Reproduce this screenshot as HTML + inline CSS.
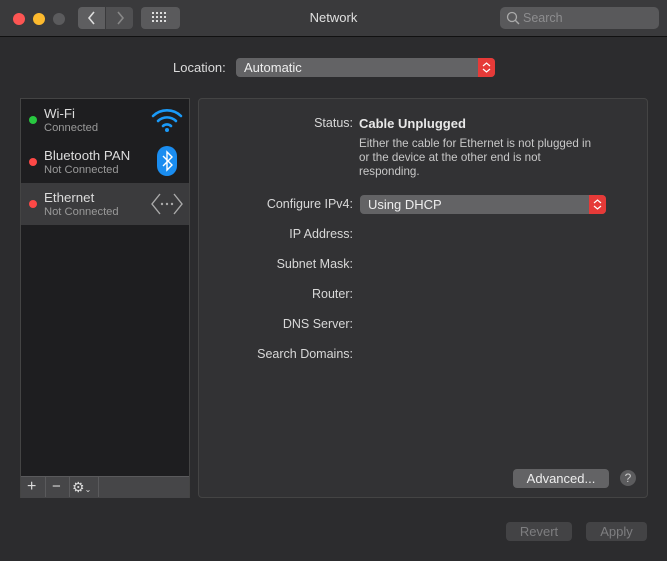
<!DOCTYPE html>
<html><head><style>
body{margin:0;width:667px;height:561px;background:#2c2c2e;font-family:"Liberation Sans",sans-serif;color:#dcdcdc;position:relative;overflow:hidden;font-size:13px}
.a{position:absolute}
.r{text-align:right;width:160px;left:193px;font-size:12.5px;color:#d8d8d8}
</style></head><body>
<div class="a" style="left:0;top:0;width:667px;height:36px;background:#3a3a3c;border-bottom:1px solid #111"></div>
<div class="a" style="left:13px;top:13px;width:12px;height:12px;border-radius:50%;background:#fd5553"></div>
<div class="a" style="left:33px;top:13px;width:12px;height:12px;border-radius:50%;background:#fdba2e"></div>
<div class="a" style="left:53px;top:13px;width:12px;height:12px;border-radius:50%;background:#5b5b5d"></div>
<div class="a" style="left:78px;top:7px;width:27px;height:22px;background:#5e5e60;border-radius:4px 0 0 4px"></div>
<div class="a" style="left:106px;top:7px;width:27px;height:22px;background:#505052;border-radius:0 4px 4px 0"></div>
<svg class="a" style="left:78px;top:7px" width="56" height="22"><path d="M16 5l-5 6 5 6" stroke="#ddd" stroke-width="1.6" fill="none"/><path d="M40 5l5 6-5 6" stroke="#888" stroke-width="1.6" fill="none"/></svg>
<div class="a" style="left:141px;top:7px;width:39px;height:22px;background:#5a5a5c;border-radius:4px"></div>
<svg class="a" style="left:152px;top:12px" width="16" height="12" fill="#ddd"><rect x="0" y="0" width="2" height="2"/><rect x="4" y="0" width="2" height="2"/><rect x="8" y="0" width="2" height="2"/><rect x="12" y="0" width="2" height="2"/><rect x="0" y="4" width="2" height="2"/><rect x="4" y="4" width="2" height="2"/><rect x="8" y="4" width="2" height="2"/><rect x="12" y="4" width="2" height="2"/><rect x="0" y="8" width="2" height="2"/><rect x="4" y="8" width="2" height="2"/><rect x="8" y="8" width="2" height="2"/><rect x="12" y="8" width="2" height="2"/></svg>
<div class="a" style="left:0;width:667px;top:10px;text-align:center;font-size:13px;color:#e0e0e0">Network</div>
<div class="a" style="left:500px;top:7px;width:159px;height:22px;background:#59595b;border-radius:5px"></div>
<svg class="a" style="left:506px;top:11px" width="14" height="14"><circle cx="6" cy="6" r="4.5" stroke="#aaa" stroke-width="1.3" fill="none"/><path d="M9 9l4 4" stroke="#aaa" stroke-width="1.4"/></svg>
<div class="a" style="left:523px;top:11px;color:#8d8d8f;font-size:12.5px">Search</div>

<div class="a" style="left:173px;top:60px;font-size:13px">Location:</div>
<div class="a" style="left:236px;top:58px;width:259px;height:19px;background:#636365;border-radius:4px"></div>
<div class="a" style="left:478px;top:58px;width:17px;height:19px;background:#e63a38;border-radius:0 4px 4px 0"></div>
<svg class="a" style="left:478px;top:58px" width="17" height="19"><path d="M5 8l3.5-3 3.5 3M5 11l3.5 3 3.5-3" stroke="#fff" stroke-width="1.2" fill="none"/></svg>
<div class="a" style="left:244px;top:60px;color:#eee">Automatic</div>

<div class="a" style="left:20px;top:98px;width:168px;height:398px;background:#1e1e20;border:1px solid #444"></div>
<div class="a" style="left:21px;top:183px;width:168px;height:42px;background:#3b3b3d"></div>
<div class="a" style="left:29px;top:116px;width:8px;height:8px;border-radius:50%;background:#28c840"></div>
<div class="a" style="left:29px;top:158px;width:8px;height:8px;border-radius:50%;background:#fd4846"></div>
<div class="a" style="left:29px;top:200px;width:8px;height:8px;border-radius:50%;background:#fd4846"></div>
<div class="a" style="left:44px;top:106px;font-size:13.3px">Wi-Fi</div>
<div class="a" style="left:44px;top:122px;font-size:11.2px;color:#999">Connected</div>
<div class="a" style="left:44px;top:148px;font-size:13.3px">Bluetooth PAN</div>
<div class="a" style="left:44px;top:164px;font-size:11.2px;color:#999">Not Connected</div>
<div class="a" style="left:44px;top:190px;font-size:13.3px">Ethernet</div>
<div class="a" style="left:44px;top:206px;font-size:11.2px;color:#999">Not Connected</div>
<svg class="a" style="left:150px;top:106px" width="34" height="28"><g stroke="#1a9af8" stroke-width="2.6" fill="none" stroke-linecap="round"><path d="M3 10a20 20 0 0 1 28 0"/><path d="M8 15a13 13 0 0 1 18 0"/><path d="M13 20a6 6 0 0 1 8 0"/></g><circle cx="17" cy="24" r="2" fill="#1a9af8"/></svg>
<div class="a" style="left:157px;top:146px;width:20px;height:30px;border-radius:10px;background:#1a8df0"></div>
<svg class="a" style="left:157px;top:146px" width="20" height="30"><path d="M6 10l9 9-5 5V6l5 5-9 9" stroke="#fff" stroke-width="1.4" fill="none"/></svg>
<svg class="a" style="left:150px;top:192px" width="34" height="24"><path d="M10 2L2 12l8 10M24 2l8 10-8 10" stroke="#aaa" stroke-width="1.4" fill="none"/><circle cx="12" cy="12" r="1.2" fill="#aaa"/><circle cx="17" cy="12" r="1.2" fill="#aaa"/><circle cx="22" cy="12" r="1.2" fill="#aaa"/></svg>
<div class="a" style="left:21px;top:476px;width:168px;height:21px;background:#464648;border-top:1px solid #5a5a5c"></div>
<div class="a" style="left:45px;top:477px;width:1px;height:20px;background:#5a5a5c"></div>
<div class="a" style="left:69px;top:477px;width:1px;height:20px;background:#5a5a5c"></div>
<div class="a" style="left:98px;top:477px;width:1px;height:20px;background:#5a5a5c"></div>
<div class="a" style="left:27px;top:478px;font-size:16px;color:#ddd">+</div>
<div class="a" style="left:52px;top:478px;font-size:15px;color:#ddd">−</div>
<div class="a" style="left:72px;top:479px;font-size:14px;color:#ddd">⚙<span style="font-size:8px">⌄</span></div>

<div class="a" style="left:198px;top:98px;width:448px;height:398px;background:#323234;border:1px solid #444;border-radius:4px"></div>
<div class="a r" style="top:116px">Status:</div>
<div class="a" style="left:359px;top:116px;font-weight:bold;color:#e8e8e8">Cable Unplugged</div>
<div class="a" style="left:359px;top:137px;font-size:11.6px;line-height:14px;color:#c8c8c8">Either the cable for Ethernet is not plugged in<br>or the device at the other end is not<br>responding.</div>
<div class="a r" style="top:197px">Configure IPv4:</div>
<div class="a" style="left:360px;top:195px;width:246px;height:19px;background:#636365;border-radius:4px"></div>
<div class="a" style="left:589px;top:195px;width:17px;height:19px;background:#e63a38;border-radius:0 4px 4px 0"></div>
<svg class="a" style="left:589px;top:195px" width="17" height="19"><path d="M5 8l3.5-3 3.5 3M5 11l3.5 3 3.5-3" stroke="#fff" stroke-width="1.2" fill="none"/></svg>
<div class="a" style="left:368px;top:197px;color:#eee">Using DHCP</div>
<div class="a r" style="top:227px">IP Address:</div>
<div class="a r" style="top:257px">Subnet Mask:</div>
<div class="a r" style="top:287px">Router:</div>
<div class="a r" style="top:317px">DNS Server:</div>
<div class="a r" style="top:347px">Search Domains:</div>
<div class="a" style="left:513px;top:469px;width:96px;height:19px;background:#636365;border-radius:4px;text-align:center;line-height:19px;color:#eee">Advanced...</div>
<div class="a" style="left:620px;top:470px;width:16px;height:16px;border-radius:50%;background:#5c5c5e;text-align:center;line-height:16px;font-size:12px;color:#ccc">?</div>
<div class="a" style="left:506px;top:522px;width:66px;height:19px;background:#434345;border-radius:4px;text-align:center;line-height:19px;color:#7e7e80">Revert</div>
<div class="a" style="left:586px;top:522px;width:61px;height:19px;background:#434345;border-radius:4px;text-align:center;line-height:19px;color:#7e7e80">Apply</div>
</body></html>
